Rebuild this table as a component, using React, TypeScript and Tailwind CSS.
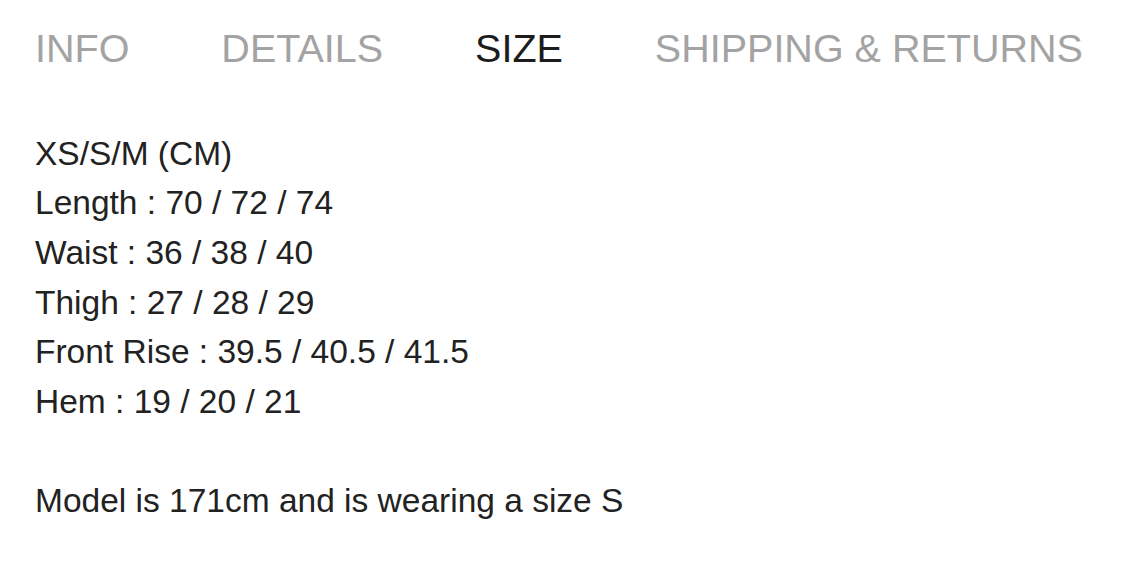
import React from "react";

const tabs = ["INFO", "DETAILS", "SIZE", "SHIPPING & RETURNS"];
const active = "SIZE";

const sizeLines = [
  "XS/S/M (CM)",
  "Length : 70 / 72 / 74",
  "Waist : 36 / 38 / 40",
  "Thigh : 27 / 28 / 29",
  "Front Rise : 39.5 / 40.5 / 41.5",
  "Hem : 19 / 20 / 21",
];

export default function App() {
  return (
    <div className="w-[1125px] h-[569px] bg-white overflow-hidden font-['Liberation_Sans',Arial,sans-serif]">
      <ul className="flex gap-[92px] pl-[35px] pt-[29px] text-[39.5px] leading-none">
        {tabs.map((tab) => (
          <li
            key={tab}
            className={tab === active ? "text-[#1c1c1c]" : "text-[#a3a3a3]"}
          >
            {tab}
          </li>
        ))}
      </ul>

      <div className="pl-[35px] mt-[60px] text-[33.5px] leading-[49.7px] text-[#222]">
        {sizeLines.map((line) => (
          <p key={line}>{line}</p>
        ))}
        <p className="mt-[49.7px]">Model is 171cm and is wearing a size S</p>
      </div>
    </div>
  );
}
